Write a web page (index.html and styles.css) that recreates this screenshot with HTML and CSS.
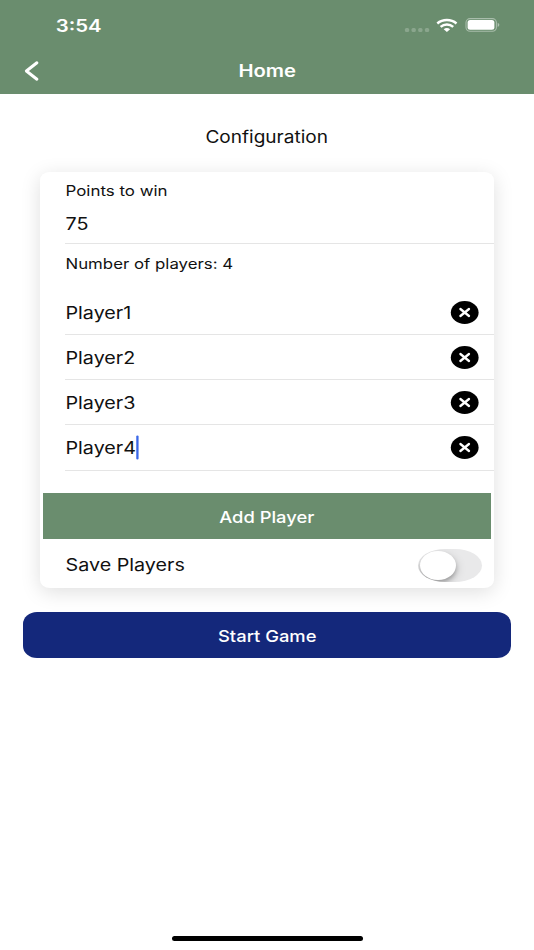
FILE: index.html
```html
<!DOCTYPE html>
<html lang="en">
<head>
<meta charset="utf-8">
<title>Home</title>
<link rel="stylesheet" href="styles.css">
</head>
<body>
<header class="header">
  <div class="status">
    <span class="wide time">3:54</span>
    <div class="indicators">
      <svg class="dots" width="26" height="4" viewBox="0 0 26 4"><g fill="#fff" fill-opacity=".22"><rect x=".5" width="4.3" height="4" rx="1.5"/><rect x="7.1" width="4.3" height="4" rx="1.5"/><rect x="13.8" width="4.3" height="4" rx="1.5"/><rect x="20.5" width="4.3" height="4" rx="1.5"/></g></svg>
      <svg class="wifi" width="21" height="13" viewBox="0 0 21 13"><g fill="none" stroke="#fff" stroke-width="2.5"><path d="M.9 4.5C6.3-.1 14.7-.1 20.1 4.5"/><path d="M4.2 7.9C7.8 4.7 13.2 4.7 16.8 7.9"/></g><path d="M7.3 10.2c1.8-1.6 4.6-1.6 6.4 0L10.5 13z" fill="#fff"/></svg>
      <svg class="battery" width="35" height="14" viewBox="0 0 35 14"><rect x=".6" y=".6" width="30.4" height="12.6" rx="4" fill="none" stroke="#fff" stroke-opacity=".42" stroke-width="1.1"/><rect x="2.2" y="2.1" width="26.8" height="9.6" rx="2.5" fill="#fff"/><path d="M32.3 4.8q3.4 2.1 0 4.2z" fill="#fff" fill-opacity=".45"/></svg>
    </div>
  </div>
  <nav class="navbar">
    <svg class="back" width="16" height="20" viewBox="0 0 16 20"><path d="M13.9 1.8L3.4 10l10.5 8.2" fill="none" stroke="#fff" stroke-width="3" stroke-linecap="round" stroke-linejoin="round"/></svg>
    <h1 class="wide nav-title">Home</h1>
  </nav>
</header>
<main class="content">
  <h2 class="title"><span class="wide title-text">Configuration</span></h2>
  <section class="card">
    <div class="points">
      <label class="wide label points-label">Points to win</label>
      <div class="wide value">75</div>
    </div>
    <div class="count"><span class="wide label count-label">Number of players: 4</span></div>
    <ul class="players">
      <li class="player"><span class="wide name">Player1</span><svg class="remove" width="28" height="24" viewBox="0 0 28 24"><ellipse cx="13.7" cy="12.5" rx="13.9" ry="11.4"/><path d="M9.4 9l8.6 7M18 9l-8.6 7"/></svg></li>
      <li class="player"><span class="wide name">Player2</span><svg class="remove" width="28" height="24" viewBox="0 0 28 24"><ellipse cx="13.7" cy="12.5" rx="13.9" ry="11.4"/><path d="M9.4 9l8.6 7M18 9l-8.6 7"/></svg></li>
      <li class="player"><span class="wide name">Player3</span><svg class="remove" width="28" height="24" viewBox="0 0 28 24"><ellipse cx="13.7" cy="12.5" rx="13.9" ry="11.4"/><path d="M9.4 9l8.6 7M18 9l-8.6 7"/></svg></li>
      <li class="player"><span class="wide name">Player4<i class="caret"></i></span><svg class="remove" width="28" height="24" viewBox="0 0 28 24"><ellipse cx="13.7" cy="12.5" rx="13.9" ry="11.4"/><path d="M9.4 9l8.6 7M18 9l-8.6 7"/></svg></li>
    </ul>
    <button class="add"><span class="wide add-text">Add Player</span></button>
    <div class="save"><span class="wide save-text">Save Players</span><span class="switch"><span class="knob"></span></span></div>
  </section>
  <button class="start"><span class="wide start-text">Start Game</span></button>
</main>
<div class="home-indicator"></div>
</body>
</html>
```
FILE: styles.css
```css
* { box-sizing: border-box; }
body {
  margin: 0;
  height: 950px;
  display: flex;
  flex-direction: column;
  overflow: hidden;
  background: #fff;
  color: #111;
  font-family: Inter, "Liberation Sans", sans-serif;
  font-size: 17px;
  line-height: 22px;
}
h1, h2, ul { margin: 0; padding: 0; font-size: inherit; font-weight: inherit; list-style: none; }
button { border: 0; padding: 0; font: inherit; color: #fff; }
svg { display: block; flex: none; overflow: visible; }

/* Horizontally extended lettering */
.wide { display: inline-block; white-space: nowrap; transform: translate(.5px, .3px) scaleX(1.16); transform-origin: left center; }

.header { flex: none; height: 93.5px; background: #6a8d6e; color: #fff; }
.status { height: 48px; display: flex; justify-content: space-between; padding: 14px 34px 0 55px; }
.time { font-weight: 600; transform: translate(.7px, .6px) scaleX(1.2); }
.indicators { display: flex; align-items: flex-start; padding-top: 4px; }
.dots { margin: 10px 6px 0 0; }
.wifi { margin: 1px 8px 0 0; }
.indicators svg { transform: translateX(.4px); }
.navbar { height: 45px; display: grid; grid-template-columns: 1fr auto 1fr; align-items: center; padding: 0 23px; }
.nav-title { font-weight: 600; transform: translateY(.4px) scaleX(1.19); transform-origin: center; }

.content { flex: 1; display: flex; flex-direction: column; }
.title { height: 78px; padding-top: 32.5px; text-align: center; }
.title-text { transform: translateY(.4px) scaleX(1.12); transform-origin: center; }
.card {
  width: 454px; height: 416.5px; margin: 0 auto;
  display: flex; flex-direction: column;
  border-radius: 10px / 8px;
  background: #fff;
  box-shadow: 0 4px 20px rgba(0, 0, 0, .13);
}
.label { font-size: 14.2px; line-height: 18px; transform: translate(.5px, .3px) scaleX(1.19); }
.count-label { transform: translate(.5px, .2px) scaleX(1.185); }
.points { flex: none; height: 72.5px; margin-left: 25px; padding-top: 10.5px; display: flex; flex-direction: column; align-items: flex-start; border-bottom: 1px solid #e5e5e5; }
.value { margin-top: 13px; }
.count { height: 46px; padding: 10.5px 0 0 25px; line-height: 0; }
.players { margin-left: 25px; }
.player { height: 45.15px; display: flex; align-items: center; justify-content: space-between; padding-right: 15.5px; border-bottom: 1px solid #e5e5e5; }
.name { position: relative; transform: translate(.5px, .5px) scaleX(1.16); }
.caret { position: absolute; right: -2px; top: -1px; width: 2.3px; height: 24px; border-radius: 1px; background: #3b68e8; }
.remove path { fill: none; stroke: #fff; stroke-width: 2.3; stroke-linecap: round; }
.add { flex: none; height: 46px; margin: 22px 3px 0; background: #6a8d6e; font-weight: 500; }
.add-text, .start-text { font-size: 16.5px; transform: translateY(.5px) scaleX(1.113); transform-origin: center; }
.save { flex: 1; display: flex; align-items: center; justify-content: space-between; padding: 4px 12.5px 0 25px; }
.switch { width: 64px; height: 33px; padding: 2px; border-radius: 27px / 16.5px; background: #e9e9ea; overflow: hidden; }
.knob { display: block; width: 36px; height: 29px; border-radius: 50%; background: #fff; box-shadow: 0 3px 4px rgba(0, 0, 0, .25), 2px 3px 10px rgba(0, 0, 0, .12); }
.start { flex: none; height: 46px; margin: 24.4px 23px 0; border-radius: 14px / 12px; background: #14287b; font-weight: 500; }
.home-indicator { flex: none; width: 191px; height: 5px; margin: 0 auto 9px; border-radius: 3px; background: #000; }
```
